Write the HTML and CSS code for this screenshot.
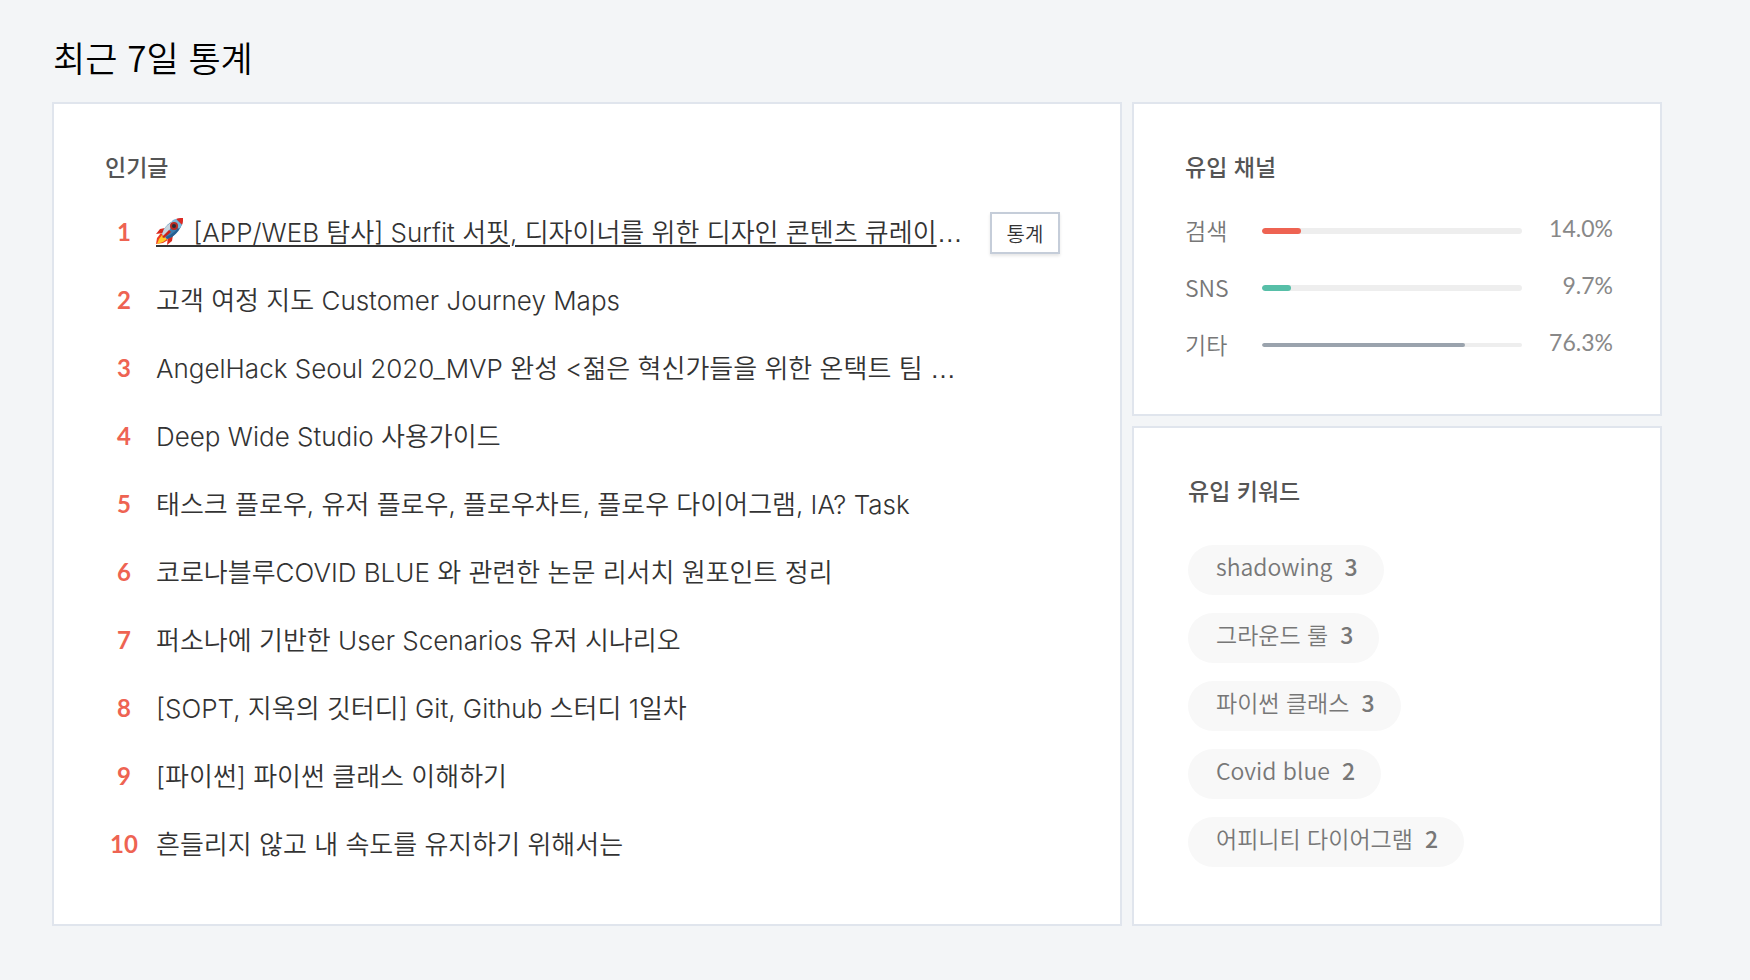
FILE: index.html
```
<!DOCTYPE html>
<html lang="ko">
<head>
    <meta charset="utf-8" />
    <meta name="viewport" content="width=device-width, initial-scale=1" />
    <title>최근 7일 통계</title>
    <link rel="stylesheet" href="styles.css">
</head>
<body>
    <main class="stats">
        <h1>최근 7일 통계</h1>

        <div class="panels">
            <section class="panel popular">
                <h2>인기글</h2>
                <ol class="post-list">
                    <li>
                        <span class="rank">1</span>
                        <div class="post-title"><a class="active" href="#"><svg class="rocket" viewBox="0 0 28 28" role="img" aria-label="로켓">
                            <path fill="#d9281c" d="M9 11 4 12 0 17l7-1zM17 18l-1 6-5 4 1-8z" />
                            <path fill="#ef3b20" d="M5 16 1 21l-1 6 7-1 5-3z" />
                            <path fill="#ffc928" d="M6 18 3 22l-2 5 6-2 4-3z" />
                            <path fill="#3c7fb0" d="M27 1C20 1 13 5 8 12l-2 5 5 5 5-2C23 15 27 8 27 1z" />
                            <path fill="#c9d5de" d="M22 2C16 4 11 8 8 12l-2 5 3 3C12 14 17 8 22 2z" />
                            <path fill="#285f91" d="M26 6c-2 6-5 10-10 14l-5 2-1-2C17 17 22 12 26 6z" />
                            <path fill="#de2a23" d="M27 1c-3 0-5 0-7 1l6 6c1-2 1-5 1-7z" />
                            <path fill="#7ab8dc" d="M20 2c-2 0-3 1-4 2l7 8 3-4z" />
                            <circle cx="18" cy="9" r="4" fill="#b72b25" />
                            <circle cx="18" cy="9" r="2" fill="#262c38" />
                            <path fill="#c9241b" d="m13 13 2 2-7 6-2-1z" />
                        </svg> [APP/WEB 탐사] Surfit 서핏, 디자이너를 위한 디자인 콘텐츠 큐레이</a><span class="dots">…</span></div>
                        <button class="stat-button" type="button">통계</button>
                    </li>
                    <li>
                        <span class="rank">2</span>
                        <div class="post-title"><a href="#">고객 여정 지도 Customer Journey Maps</a></div>
                    </li>
                    <li>
                        <span class="rank">3</span>
                        <div class="post-title"><a href="#">AngelHack Seoul 2020_MVP 완성 &lt;젊은 혁신가들을 위한 온택트 팀 </a><span class="dots">…</span></div>
                    </li>
                    <li>
                        <span class="rank">4</span>
                        <div class="post-title"><a href="#">Deep Wide Studio 사용가이드</a></div>
                    </li>
                    <li>
                        <span class="rank">5</span>
                        <div class="post-title"><a href="#">태스크 플로우, 유저 플로우, 플로우차트, 플로우 다이어그램, IA? Task</a></div>
                    </li>
                    <li>
                        <span class="rank">6</span>
                        <div class="post-title"><a href="#">코로나블루COVID BLUE 와 관련한 논문 리서치 원포인트 정리</a></div>
                    </li>
                    <li>
                        <span class="rank">7</span>
                        <div class="post-title"><a href="#">퍼소나에 기반한 User Scenarios 유저 시나리오</a></div>
                    </li>
                    <li>
                        <span class="rank">8</span>
                        <div class="post-title"><a href="#">[SOPT, 지옥의 깃터디] Git, Github 스터디 1일차</a></div>
                    </li>
                    <li>
                        <span class="rank">9</span>
                        <div class="post-title"><a href="#">[파이썬] 파이썬 클래스 이해하기</a></div>
                    </li>
                    <li>
                        <span class="rank">10</span>
                        <div class="post-title"><a href="#">흔들리지 않고 내 속도를 유지하기 위해서는</a></div>
                    </li>
                </ol>
            </section>

            <div class="side">
                <section class="panel channels">
                    <h2>유입 채널</h2>
                    <ul class="channel-list">
                        <li>
                            <span class="channel-name">검색</span>
                            <div class="bar"><div class="fill search" style="width: 15%"></div></div>
                            <span class="percent">14.0%</span>
                        </li>
                        <li>
                            <span class="channel-name">SNS</span>
                            <div class="bar"><div class="fill sns" style="width: 11%"></div></div>
                            <span class="percent">9.7%</span>
                        </li>
                        <li>
                            <span class="channel-name">기타</span>
                            <div class="bar thin"><div class="fill etc" style="width: 78%"></div></div>
                            <span class="percent">76.3%</span>
                        </li>
                    </ul>
                </section>

                <section class="panel keywords">
                    <h2>유입 키워드</h2>
                    <ul class="keyword-list">
                        <li>shadowing <strong>3</strong></li>
                        <li>그라운드 룰 <strong>3</strong></li>
                        <li>파이썬 클래스 <strong>3</strong></li>
                        <li>Covid blue <strong>2</strong></li>
                        <li>어피니티 다이어그램 <strong>2</strong></li>
                    </ul>
                </section>
            </div>
        </div>
    </main>
</body>
</html>
```

FILE: styles.css
```
* { box-sizing: border-box; margin: 0; padding: 0; }
body {
    font-family: Lato, 'Noto Sans CJK KR DemiLight', 'Noto Sans CJK KR', sans-serif;
    background: #f3f5f7;
    color: #333;
}
ul, ol {
    list-style: none;
}
.stats {
    padding: 31px 88px 54px 52px;
}
h1 {
    margin-bottom: 19px;
    padding-left: 1px;
    font-family: 'Noto Sans CJK KR', sans-serif;
    font-size: 35px;
    font-weight: 350;
    line-height: 52px;
    color: #000;
}
h2 {
    font-family: 'Noto Sans CJK KR', sans-serif;
    font-size: 23px;
    font-weight: 500;
    line-height: 32px;
    color: #555;
}
.panels {
    display: grid;
    grid-template-columns: minmax(0, 107fr) minmax(0, 53fr);
    gap: 10px;
}
.panel {
    background: white;
    border: 2px solid #e0e5ed;
}
.side {
    display: flex;
    flex-direction: column;
    gap: 10px;
}

/* popular posts */
.popular {
    padding: 46px 60px 45px 51px;
}
.post-list {
    margin-top: 17px;
}
.post-list li {
    display: flex;
    align-items: center;
    height: 68px;
}
.rank {
    flex: none;
    width: 38px;
    margin-right: 13px;
    padding-bottom: 4px;
    text-align: center;
    font-size: 24px;
    font-weight: 700;
    color: #ee6352;
}
.post-title {
    flex: 1;
    min-width: 0;
    font-family: Inter, 'Noto Sans CJK KR DemiLight', 'Noto Sans CJK KR', sans-serif;
    font-size: 26px;
    font-weight: 300;
    line-height: 40px;
    white-space: nowrap;
    overflow: hidden;
    text-overflow: ellipsis;
}
.post-title a {
    color: #333;
    text-decoration: none;
}
.post-title a.active, .post-title a:hover {
    text-decoration: underline;
    text-decoration-thickness: 2px;
    text-underline-offset: 3px;
}
.dots {
    font-family: 'Liberation Sans', sans-serif;
}
/* the border carries the link underline below the icon */
.rocket {
    width: 30px;
    height: 30px;
    padding-right: 2px;
    border-bottom: 2px solid #333;
    vertical-align: -5px;
}
.stat-button {
    flex: none;
    width: 70px;
    height: 42px;
    margin-left: 20px;
    border: 2px solid #c5cdd9;
    background: white;
    box-shadow: 0 2px 3px rgba(0,0,0,0.1);
    font: inherit;
    font-size: 20px;
    color: #333;
    cursor: pointer;
}

/* channels */
.channels {
    padding: 46px 47px 41px 51px;
}
.channel-list {
    margin-top: 20px;
}
.channel-list li {
    display: flex;
    align-items: center;
    height: 57px;
    font-size: 23px;
    color: #777;
}
.channel-name {
    width: 77px;
    padding-bottom: 2px;
    font-family: 'Noto Sans CJK KR', sans-serif;
    font-weight: 350;
}
.bar {
    flex: 1;
    height: 6px;
    border-radius: 3px;
    background: #eee;
    overflow: hidden;
}
.bar.thin {
    height: 4px;
}
.fill {
    height: 100%;
    border-radius: 3px;
}
.search { background: #ee6352; }
.sns { background: #57bfa8; }
.etc { background: #9aa3ad; }
.percent {
    width: 91px;
    padding-bottom: 6px;
    text-align: right;
    color: #888;
}

/* keywords */
.keywords {
    flex: 1;
    padding: 46px 48px 56px 54px;
}
.keyword-list {
    display: flex;
    flex-direction: column;
    align-items: flex-start;
    gap: 18px;
    margin-top: 39px;
}
.keyword-list li {
    display: flex;
    gap: 12px;
    height: 50px;
    padding: 0 26px 0 28px;
    border-radius: 25px;
    background: #f8f8f8;
    font-family: 'Noto Sans CJK KR', sans-serif;
    font-size: 23px;
    font-weight: 350;
    line-height: 43px;
    color: #777;
}
.keyword-list strong {
    font-weight: 500;
}
```
